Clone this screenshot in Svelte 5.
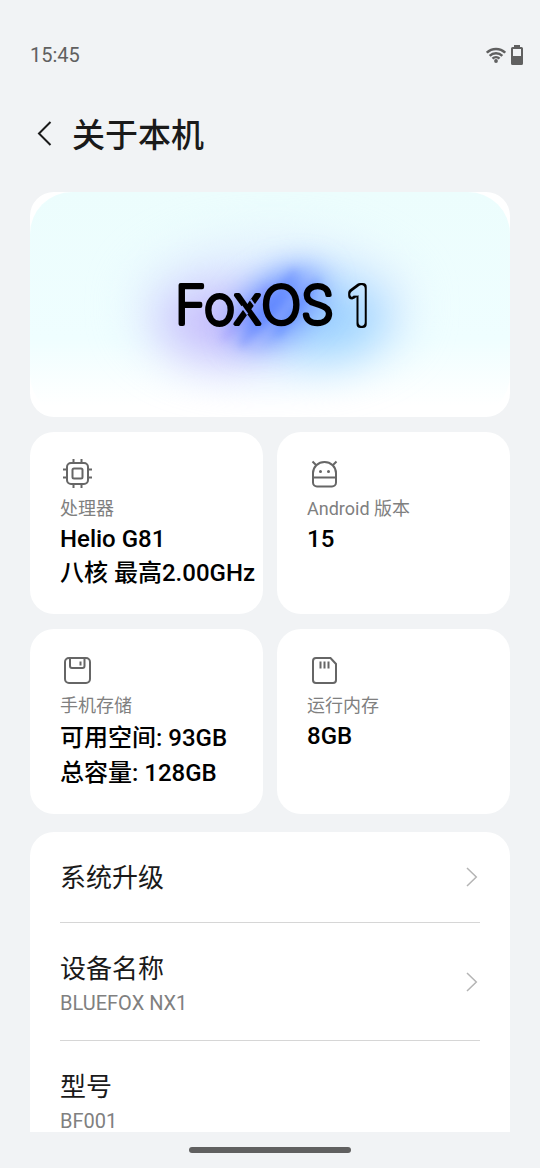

<script lang="ts">
	type Spec = { icon: 'cpu' | 'android' | 'disk' | 'card'; label: string; values: string[] };
	type Row = { title: string; sub?: string; link: boolean };

	const specs: Spec[] = [
		{ icon: 'cpu', label: '处理器', values: ['Helio G81', '八核 最高2.00GHz'] },
		{ icon: 'android', label: 'Android 版本', values: ['15'] },
		{ icon: 'disk', label: '手机存储', values: ['可用空间: 93GB', '总容量: 128GB'] },
		{ icon: 'card', label: '运行内存', values: ['8GB'] }
	];

	const rows: Row[] = [
		{ title: '系统升级', link: true },
		{ title: '设备名称', sub: 'BLUEFOX NX1', link: true },
		{ title: '型号', sub: 'BF001', link: false }
	];

	// Han glyphs need a taller line than Latin ones
	const hasHan = (s: string): boolean => /[\u4e00-\u9fff]/.test(s);
</script>

{#snippet rowBody(row: Row)}
	<span class="row-text" class:two-line={row.sub}>
		<span class="row-title">{row.title}</span>
		{#if row.sub}<span class="row-sub">{row.sub}</span>{/if}
	</span>
	{#if row.link}
		<svg class="chevron" viewBox="0 0 12 20" aria-hidden="true">
			<path d="M1 1l9.300 9L1 19" />
		</svg>
	{/if}
{/snippet}

<div class="screen">
	<div class="status">
		<span>15:45</span>
		<span class="status-icons">
			<svg width="20" height="16" viewBox="0 0 20 16" aria-hidden="true">
				<g fill="none" stroke="#606060" stroke-width="2.500">
					<path d="M.8 5.700a13 13 0 0 1 18.400 0" />
					<path d="M3.700 8.800a8.900 8.900 0 0 1 12.600 0" />
					<path d="M6.500 11.700a5 5 0 0 1 7 0" />
				</g>
				<circle cx="10" cy="14" r="1.900" fill="#606060" />
			</svg>
			<svg width="12" height="20" viewBox="0 0 12 20" aria-hidden="true">
				<path
					fill="#606060"
					fill-rule="evenodd"
					d="M3 0h6v2h1.500A1.500 1.500 0 0 1 12 3.500v15a1.500 1.500 0 0 1-1.500 1.500h-9A1.500 1.500 0 0 1 0 18.500v-15A1.500 1.500 0 0 1 1.500 2H3zM2 4v7h8V4z"
				/>
			</svg>
		</span>
	</div>

	<header class="bar">
		<button class="back" aria-label="返回">
			<svg width="16" height="26" viewBox="0 0 16 26" aria-hidden="true">
				<path d="M14.500 1L3 12.500l11.500 11.500" />
			</svg>
		</button>
		<h1>关于本机</h1>
	</header>

	<main>
		<div class="banner">
			<svg class="art" viewBox="0 0 480 225" role="img" aria-label="FoxOS 1">
				<defs>
					<linearGradient id="base" x1="0" y1="0" x2="0" y2="1">
						<stop offset="0" stop-color="#ecfdfd" />
						<stop offset="0.65" stop-color="#effeff" />
						<stop offset="0.95" stop-color="#ffffff" />
					</linearGradient>
					<filter id="b-lg" x="-100%" y="-100%" width="300%" height="300%" color-interpolation-filters="sRGB">
						<feGaussianBlur stdDeviation="24" />
					</filter>
					<filter id="b-md" x="-100%" y="-100%" width="300%" height="300%" color-interpolation-filters="sRGB">
						<feGaussianBlur stdDeviation="16" />
					</filter>
					<filter id="b-sm" x="-100%" y="-100%" width="300%" height="300%" color-interpolation-filters="sRGB">
						<feGaussianBlur stdDeviation="4" />
					</filter>
					<filter id="hollow" x="-50%" y="-50%" width="200%" height="200%">
						<feMorphology in="SourceAlpha" operator="erode" radius="1.500" result="core" />
						<feComposite in="SourceGraphic" in2="core" operator="out" />
					</filter>
					<mask id="cuts" maskUnits="userSpaceOnUse" x="0" y="0" width="480" height="225">
						<rect width="480" height="225" fill="#fff" />
						<path d="M220.500 107.600l6 8.200M211.500 114.200l6 8.200" stroke="#000" stroke-width="2" />
					</mask>
				</defs>
				<rect width="480" height="225" rx="42" fill="url(#base)" />
				<g filter="url(#b-lg)">
					<ellipse cx="242" cy="114" rx="136" ry="66" fill="#dce8ff" opacity="0.7" />
					<ellipse cx="190" cy="132" rx="60" ry="38" fill="#bfb0fb" opacity="0.8" />
					<ellipse cx="296" cy="128" rx="62" ry="40" fill="#8ccaff" opacity="0.8" />
				</g>
				<g filter="url(#b-md)">
					<ellipse cx="248" cy="114" rx="50" ry="26" fill="#5f86ff" transform="rotate(-36 248 114)" />
				</g>
				<g filter="url(#b-sm)" stroke-width="6" stroke-linecap="round" opacity="0.3">
					<path d="M194 146l44-50" stroke="#8b7cff" />
					<path d="M212 152l52-72" stroke="#4a70ff" />
					<path d="M248 142l38-52" stroke="#3f74ff" />
					<path d="M226 154l56-70" stroke="#c5d0ff" />
				</g>
				<g mask="url(#cuts)">
					<text class="logo" x="145" y="132">FoxOS</text>
				</g>
				<text class="logo logo-num" x="319" y="132" filter="url(#hollow)">1</text>
			</svg>
		</div>

		<section class="specs">
			{#each specs as spec}
				<article class="spec">
					<svg class="icon" viewBox="0 0 34 34" aria-hidden="true">
						{#if spec.icon === 'cpu'}
							<rect x="7" y="7" width="21" height="21" rx="4" />
							<rect x="12.500" y="12.500" width="10" height="10" rx="1.500" />
							<path d="M13.500 6V3M21.500 6V3M13.500 32v-3M21.500 32v-3M6 13.500H3M6 21.500H3M32 13.500h-3M32 21.500h-3" />
						{:else if spec.icon === 'android'}
							<path d="M6 17a11.500 11 0 0 1 23 0v9.500a4 4 0 0 1-4 4H10a4 4 0 0 1-4-4zM6 21.500h23M5.500 5.500L9.500 9.500M29.500 5.500L25.500 9.500" />
							<path class="dots" d="M13.500 15.500v.01M21.500 15.500v.01" />
						{:else if spec.icon === 'disk'}
							<rect x="5" y="5" width="25" height="25" rx="4" />
							<path d="M10 5.500v7.500a2 2 0 0 0 2 2h10.500a2 2 0 0 0 2-2V5.500M20.500 8.500v4" />
						{:else}
							<path d="M9 5h14.500l5.500 6V27a3 3 0 0 1-3 3H9a3 3 0 0 1-3-3V8a3 3 0 0 1 3-3z" />
							<path d="M13.500 8.500v7M17.500 8.500v7M21.500 8.500v7" />
						{/if}
					</svg>
					<h2>{spec.label}</h2>
					{#each spec.values as value}
						<p class:han={hasHan(value)}>{value}</p>
					{/each}
				</article>
			{/each}
		</section>

		<ul class="list">
			{#each rows as row}
				<li>
					{#if row.link}
						<button class="row">{@render rowBody(row)}</button>
					{:else}
						<div class="row">{@render rowBody(row)}</div>
					{/if}
				</li>
			{/each}
		</ul>
	</main>

	<div class="nav"><span class="pill"></span></div>
</div>

<style>
	:global(body) {
		margin: 0;
		background: #f1f3f5;
	}

	.screen {
		display: flex;
		flex-direction: column;
		height: 100vh;
		background: #f1f3f5;
		color: #1a1a1a;
		font-family: Roboto, 'Noto Sans CJK SC', sans-serif;
	}

	.status {
		display: flex;
		align-items: center;
		justify-content: space-between;
		padding: 45px 17px 0 30px;
		color: #606060;
		font-size: 20px;
		line-height: 20px;
	}
	.status-icons {
		display: flex;
		align-items: center;
		gap: 5px;
	}

	.bar {
		display: flex;
		align-items: center;
		gap: 14px;
		padding: 47px 30px 32px 36px;
	}
	.back {
		display: flex;
		padding: 0 6px 4px 0;
		border: 0;
		background: none;
		cursor: pointer;
	}
	.back path {
		fill: none;
		stroke: #1a1a1a;
		stroke-width: 2;
	}
	h1 {
		margin: 0;
		font-size: 33px;
		font-weight: 500;
		line-height: 48px;
	}

	main {
		flex: 1;
		min-height: 0;
		padding: 0 30px;
		overflow-y: auto;
		scrollbar-width: none;
	}

	.banner {
		border-radius: 24px;
		background: #fff;
		overflow: hidden;
	}
	.art {
		display: block;
		width: 100%;
	}
	/* A thin weight under a thick round stroke gives the wordmark its soft ends */
	.logo {
		font-family: Inter, sans-serif;
		font-size: 53px;
		font-weight: 200;
		fill: #000;
		stroke: #000;
		stroke-width: 4;
		stroke-linejoin: round;
	}
	.logo-num {
		font-size: 50px;
		stroke-width: 8;
	}

	.specs {
		display: grid;
		grid-template-columns: 1fr 1fr;
		gap: 15px 14px;
		margin: 15px 0 18px;
	}
	.spec {
		min-width: 0;
		padding: 24px 0 24px 30px;
		border-radius: 24px;
		background: #fff;
		white-space: nowrap;
	}
	.icon {
		display: block;
		width: 34px;
		height: 34px;
		fill: none;
		stroke: #666;
		stroke-width: 2;
	}
	.dots {
		stroke-width: 3;
		stroke-linecap: round;
	}
	h2 {
		margin: 5px 0 0;
		color: #808080;
		font-size: 18px;
		font-weight: 400;
		line-height: 28px;
	}
	.spec p {
		margin: 0;
		color: #000;
		font-size: 24px;
		font-weight: 500;
		line-height: 32px;
	}
	.spec p.han {
		padding: 2px 0 1px;
	}

	.list {
		margin: 0;
		padding: 0 30px;
		border-radius: 24px;
		background: #fff;
		list-style: none;
	}
	li + li {
		border-top: 1px solid #d6d6d6;
	}
	.row {
		display: flex;
		align-items: center;
		justify-content: space-between;
		box-sizing: border-box;
		width: 100%;
		min-height: 90px;
		padding: 0 2px 0 0;
		border: 0;
		background: none;
		color: inherit;
		font: inherit;
		text-align: left;
	}
	button.row {
		cursor: pointer;
	}
	.row-text {
		display: flex;
		flex-direction: column;
		gap: 2px;
		padding-top: 2px;
	}
	.two-line {
		padding: 28px 0 23px;
	}
	.row-title {
		font-size: 26px;
		line-height: 36px;
	}
	.row-sub {
		color: #808080;
		font-size: 20px;
		line-height: 28px;
	}
	.chevron {
		width: 12px;
		height: 20px;
		fill: none;
		stroke: #b4b4b4;
		stroke-width: 1.5;
	}

	.nav {
		display: flex;
		align-items: center;
		justify-content: center;
		height: 36px;
	}
	.pill {
		width: 30%;
		height: 6px;
		border-radius: 3px;
		background: #606060;
	}
</style>
